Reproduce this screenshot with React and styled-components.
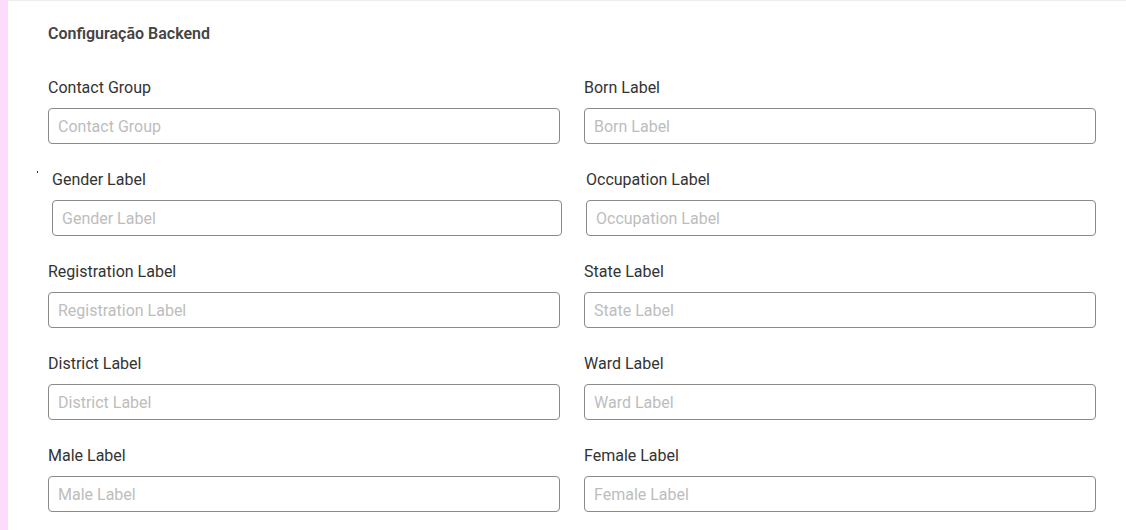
import React from "react";
import styled, { createGlobalStyle } from "styled-components";

const GlobalStyle = createGlobalStyle`
  html, body {
    margin: 0;
    padding: 0;
    background: #ffffff;
    font-family: Roboto, "Liberation Sans", sans-serif;
  }
`;

const Page = styled.div`
  display: flex;
  min-height: 530px;
`;

const SideStrip = styled.div`
  width: 8px;
  flex: none;
  background: #fbdcfb;
`;

const Card = styled.section`
  flex: 1;
  border-top: 1px solid #ececec;
  padding: 21px 30px 0 40px;
`;

const Title = styled.h2`
  margin: 0 0 30px;
  font-size: 16px;
  line-height: 24px;
  font-weight: 600;
  color: #444;
`;

const Row = styled.div`
  position: relative;
  display: grid;
  grid-template-columns: 1fr 1fr;
  column-gap: 24px;
  padding-left: ${(p) => (p.$shift ? "4px" : "0")};
  margin-bottom: 24px;
`;

const Dot = styled.span`
  position: absolute;
  left: -11px;
  top: 3px;
  width: 1px;
  height: 2px;
  background: #333;
`;

const Field = styled.div`
  display: flex;
  flex-direction: column;
`;

const Label = styled.label`
  font-size: 16px;
  line-height: 24px;
  color: #333;
  margin-bottom: 8px;
`;

const Input = styled.input`
  box-sizing: border-box;
  height: 36px;
  width: 100%;
  border: 1px solid #8a8a8a;
  border-radius: 4px;
  padding: 0 9px;
  font-family: Roboto, "Liberation Sans", sans-serif;
  font-size: 16px;
  color: #333;
  outline: none;
  &::placeholder {
    color: #bdbdbd;
  }
`;

const rows = [
  ["Contact Group", "Born Label"],
  ["Gender Label", "Occupation Label"],
  ["Registration Label", "State Label"],
  ["District Label", "Ward Label"],
  ["Male Label", "Female Label"],
];

export default function App() {
  return (
    <>
      <GlobalStyle />
      <Page>
        <SideStrip />
        <Card>
          <Title>Configuração Backend</Title>
          {rows.map(([a, b], i) => (
            <Row key={a} $shift={i === 1}>
              {i === 1 && <Dot />}
              <Field>
                <Label>{a}</Label>
                <Input placeholder={a} />
              </Field>
              <Field>
                <Label>{b}</Label>
                <Input placeholder={b} />
              </Field>
            </Row>
          ))}
        </Card>
      </Page>
    </>
  );
}
